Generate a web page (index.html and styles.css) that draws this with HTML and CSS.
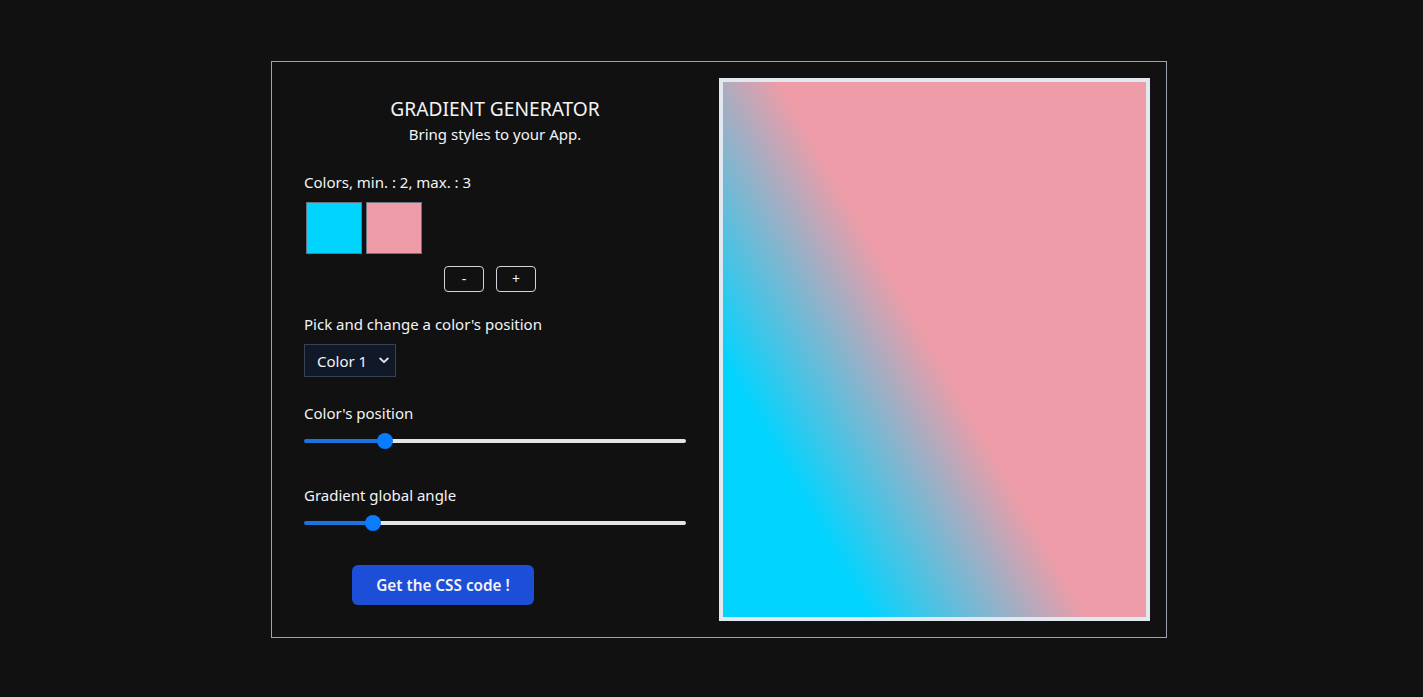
FILE: index.html
```html
<!DOCTYPE html>
<html lang="en">
<head>
<meta charset="utf-8">
<title>Gradient Generator</title>
<link rel="stylesheet" href="styles.css">
</head>
<body>
<main class="panel">
  <section class="controls">
    <h1 class="title">GRADIENT GENERATOR</h1>
    <p class="subtitle">Bring styles to your App.</p>

    <p class="label label-colors">Colors, min. : 2, max. : 3</p>
    <div class="swatches">
      <div class="swatch swatch-cyan"></div>
      <div class="swatch swatch-pink"></div>
    </div>
    <div class="count-buttons">
      <button class="small-btn" type="button">-</button>
      <button class="small-btn" type="button">+</button>
    </div>

    <p class="label label-pick">Pick and change a color's position</p>
    <div class="select-wrap">
      <select class="color-select">
        <option>Color 1</option>
        <option>Color 2</option>
      </select>
      <svg class="chevron" width="10" height="7" viewBox="0 0 10 7" aria-hidden="true"><path d="M1.2 1.5 L5 5.2 L8.8 1.5" fill="none" stroke="#e5e7eb" stroke-width="1.8" stroke-linecap="round" stroke-linejoin="round"/></svg>
    </div>

    <p class="label label-pos">Color's position</p>
    <div class="range-row">
      <input class="range" type="range" min="0" max="100" value="20" style="--fill: 21.2%">
    </div>

    <p class="label label-angle">Gradient global angle</p>
    <div class="range-row">
      <input class="range" type="range" min="0" max="360" value="60" style="--fill: 18.1%">
    </div>

    <button class="cta" type="button">Get the CSS code !</button>
  </section>
  <section class="preview-frame">
    <div class="preview" style="background: linear-gradient(60deg, #00d4ff 20%, #ee9ca7 50%)"></div>
  </section>
</main>
</body>
</html>
```

FILE: styles.css
```css
* { box-sizing: border-box; }
html, body { margin: 0; padding: 0; }
body {
  background: #111111;
  color: #f3f4f6;
  font-family: "Noto Sans", "Open Sans", sans-serif;
  height: 697px;
  padding: 61px 0 0 271px;
}
.panel {
  display: flex;
  width: 896px;
  height: 577px;
  border: 1px solid #9ca3af;
  padding: 16px;
  gap: 17px;
}
.controls {
  width: 414px;
  padding: 0 16px;
  display: flex;
  flex-direction: column;
  align-items: flex-start;
}
.title {
  align-self: stretch;
  text-align: center;
  margin: 18px 0 0;
  font-size: 19.2px;
  line-height: 26px;
  font-weight: 400;
  color: #f3f4f6;
}
.subtitle {
  align-self: stretch;
  text-align: center;
  margin: 0;
  font-size: 15px;
  line-height: 24px;
}
.label {
  margin: 0;
  font-size: 15px;
  line-height: 24px;
  color: #f3f4f6;
}
.label-colors { margin-top: 24px; }
.swatches {
  display: flex;
  gap: 4px;
  margin: 8px 0 0 2px;
}
.swatch {
  width: 56px;
  height: 52px;
  border: 1px solid #6b7280;
}
.swatch-cyan { background: #00d4ff; }
.swatch-pink { background: #ee9ca7; }
.count-buttons {
  display: flex;
  gap: 12px;
  margin: 12px 0 0 140px;
}
.small-btn {
  width: 40px;
  height: 26px;
  background: transparent;
  color: #f3f4f6;
  border: 1px solid #d1d5db;
  border-radius: 4px;
  font-family: inherit;
  font-size: 14px;
  line-height: 1;
  padding: 0;
}
.label-pick { margin-top: 20px; }
.select-wrap {
  position: relative;
  margin-top: 8px;
}
.color-select {
  appearance: none;
  -webkit-appearance: none;
  width: 92px;
  height: 33px;
  background: #111827;
  color: #f3f4f6;
  border: 1px solid #374151;
  border-radius: 0;
  padding: 0 0 0 12px;
  font-family: inherit;
  font-size: 15px;
}
.chevron {
  position: absolute;
  right: 7px;
  top: 13px;
  pointer-events: none;
}
.label-pos { margin-top: 24px; }
.label-angle { margin-top: 34px; }
.range-row {
  align-self: stretch;
  height: 16px;
  margin-top: 8px;
  display: flex;
  align-items: center;
}
.range {
  -webkit-appearance: none;
  appearance: none;
  width: 100%;
  height: 16px;
  margin: 0;
  background: transparent;
}
.range::-webkit-slider-runnable-track {
  height: 4px;
  border-radius: 2px;
  background: linear-gradient(to right, #1a73e0 var(--fill), #e5e5e5 var(--fill));
}
.range::-webkit-slider-thumb {
  -webkit-appearance: none;
  width: 16px;
  height: 16px;
  border-radius: 50%;
  background: #0a7cff;
  border: none;
  margin-top: -6px;
}
.cta {
  margin: 34px 0 0 48px;
  width: 182px;
  height: 40px;
  border: none;
  border-radius: 6px;
  background: #1d4ed8;
  color: #f3f4f6;
  font-family: inherit;
  font-size: 15.3px;
  font-weight: 600;
}
.preview-frame {
  width: 431px;
  height: 543px;
  border: 4px solid #e2e8f0;
}
.preview {
  width: 100%;
  height: 100%;
}
```
